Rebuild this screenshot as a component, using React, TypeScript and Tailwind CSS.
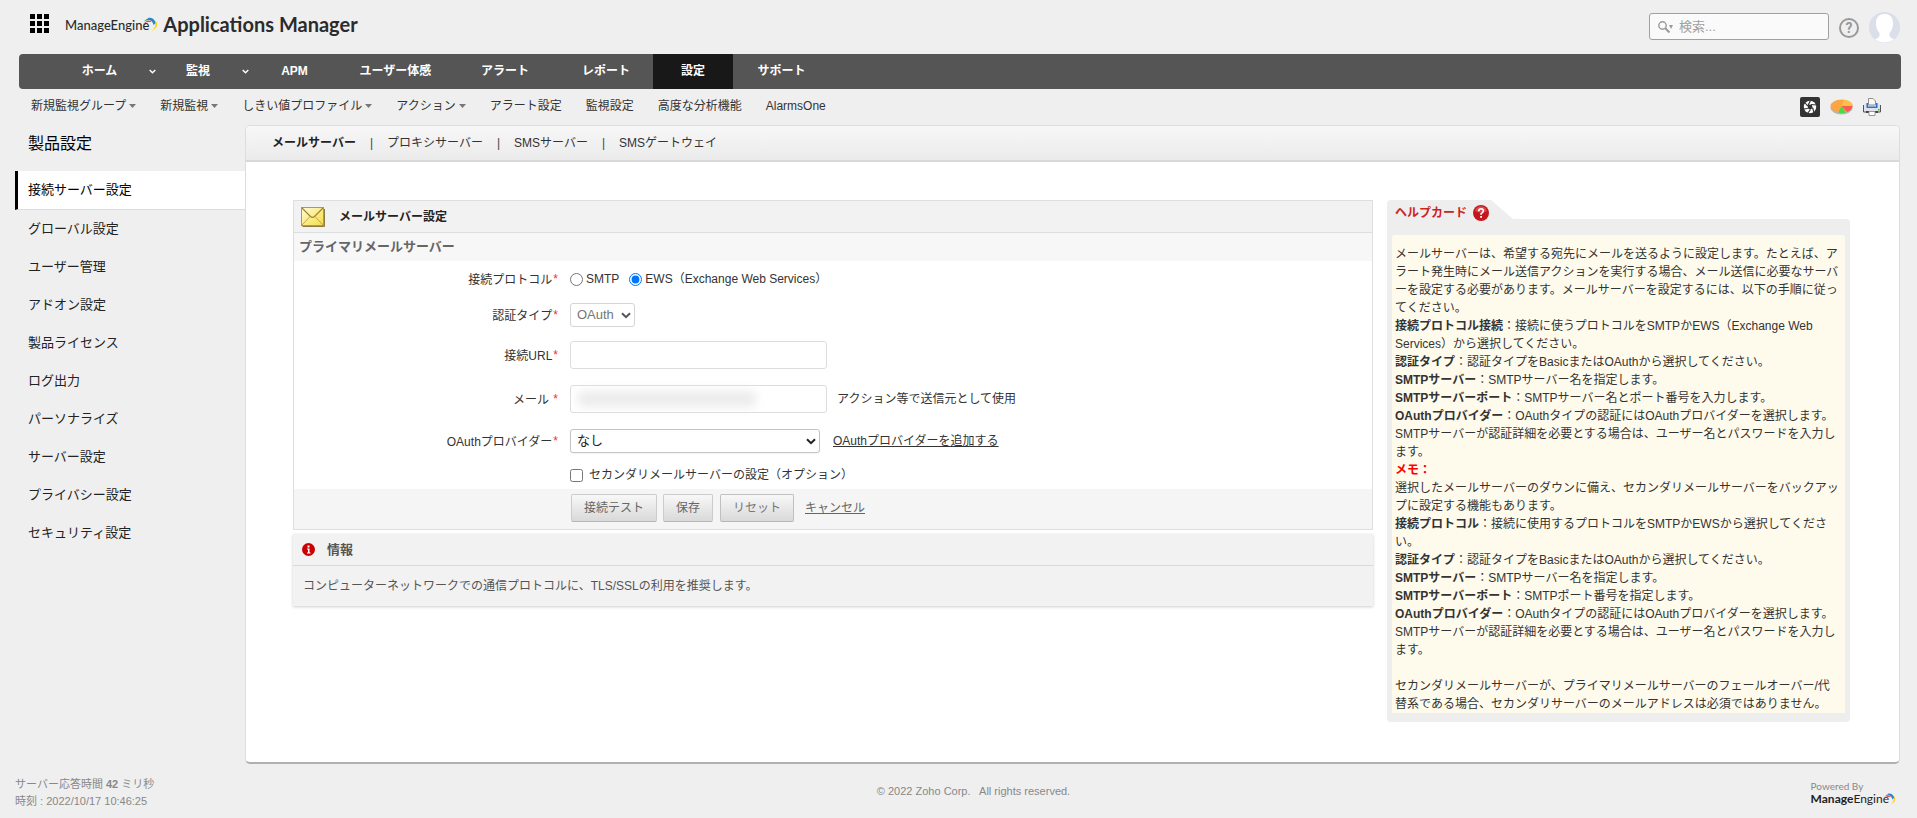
import type { ReactNode } from "react";

const topTabs = [
    { label: "ホーム", width: "w-[95px]", arrow: true },
    { label: "監視", width: "w-[84px]", arrow: true },
    { label: "APM", width: "w-[91px]" },
    { label: "ユーザー体感", width: "w-[111px]" },
    { label: "アラート", width: "w-[108px]" },
    { label: "レポート", width: "w-[94px]" },
    { label: "設定", width: "w-20", active: true },
    { label: "サポート", width: "w-[97px]" }
];

const subLinks = [
    { label: "新規監視グループ", menu: true },
    { label: "新規監視", menu: true },
    { label: "しきい値プロファイル", menu: true },
    { label: "アクション", menu: true },
    { label: "アラート設定" },
    { label: "監視設定" },
    { label: "高度な分析機能" },
    { label: "AlarmsOne" }
];

const sideLinks = [
    "グローバル設定",
    "ユーザー管理",
    "アドオン設定",
    "製品ライセンス",
    "ログ出力",
    "パーソナライズ",
    "サーバー設定",
    "プライバシー設定",
    "セキュリティ設定"
];

const serverTabs = ["メールサーバー", "プロキシサーバー", "SMSサーバー", "SMSゲートウェイ"];

const helpItems = [
    { term: "接続プロトコル接続", text: "接続に使うプロトコルをSMTPかEWS（Exchange Web Services）から選択してください。" },
    { term: "認証タイプ", text: "認証タイプをBasicまたはOAuthから選択してください。" },
    { term: "SMTPサーバー", text: "SMTPサーバー名を指定します。" },
    { term: "SMTPサーバーポート", text: "SMTPサーバー名とポート番号を入力します。" },
    { term: "OAuthプロバイダー", text: "OAuthタイプの認証にはOAuthプロバイダーを選択します。SMTPサーバーが認証詳細を必要とする場合は、ユーザー名とパスワードを入力します。" }
];

const memoItems = [
    { term: "接続プロトコル", text: "接続に使用するプロトコルをSMTPかEWSから選択してください。" },
    { term: "認証タイプ", text: "認証タイプをBasicまたはOAuthから選択してください。" },
    { term: "SMTPサーバー", text: "SMTPサーバー名を指定します。" },
    { term: "SMTPサーバーポート", text: "SMTPポート番号を指定します。" },
    { term: "OAuthプロバイダー", text: "OAuthタイプの認証にはOAuthプロバイダーを選択します。SMTPサーバーが認証詳細を必要とする場合は、ユーザー名とパスワードを入力します。" }
];

function Swoosh({ className }: { className: string }) {
    return (
        <svg viewBox="0 0 15 15" className={className}>
            <path d="M.8 4.600Q3 1.500 6.500 1.300L6 3Q3.500 3 .8 4.600z" fill="#2ba24c" />
            <path d="M.3 7.200Q2.500 3.200 7.500 3.400L8.500 5Q4 4.200.3 7.200z" fill="#e5353c" />
            <path d="M4.500.9Q10.500-.5 13 6L10.500 8Q9.500 3.500 5.500 2.600z" fill="#2a86c8" />
            <path d="M12.500 3.500Q17 9.500 8.800 14.300 13.300 10 12.500 3.500z" fill="#f7d31c" />
        </svg>
    );
}

function Caret() {
    return (
        <svg viewBox="0 0 7 4" className="ml-[3px] h-1 w-[7px]" fill="#777777">
            <path d="M0 0h7L3.500 4z" />
        </svg>
    );
}

function Chevron({ className }: { className: string }) {
    return (
        <svg viewBox="0 0 10 7" className={className} fill="none" stroke="currentColor" strokeWidth="2">
            <path d="M1 1.200 5 5.200 9 1.200" />
        </svg>
    );
}

function Field({ label, id, children, className }: { label?: string; id?: string; children: ReactNode; className: string }) {
    return (
        <div className={`flex items-center ${className}`}>
            <div className="w-[264px] shrink-0 text-right">
                {label && (
                    <label htmlFor={id}>
                        {label}
                        <span className="ml-px align-[1px] text-[#ff2a2a]">*</span>
                    </label>
                )}
            </div>
            <div className="ml-3 flex items-center">{children}</div>
        </div>
    );
}

function HelpList({ items }: { items: { term: string; text: string }[] }) {
    return (
        <>
            {items.map(item => (
                <p key={item.term}>
                    <b>{item.term}</b>：{item.text}
                </p>
            ))}
        </>
    );
}

function Header() {
    return (
        <header className="flex h-[54px] items-start pt-3 pr-[17px] pl-[30px]">
            <button aria-label="メニュー" className="mt-[2px]">
                <svg viewBox="0 0 19 19" className="size-[19px]">
                    {[0, 7, 14].map(y => [0, 7, 14].map(x => <rect key={`${x}-${y}`} x={x} y={y} width="5" height="5" />))}
                </svg>
            </button>
            <a href="#" className="ml-4 flex h-6 items-center font-['Lato',sans-serif] text-[#2b2b2b]">
                <span className="mt-1 text-[13px] font-medium">ManageEngine</span>
                <Swoosh className="-ml-[6px] size-[15px]" />
                <span className="ml-[5px] text-xl font-bold">Applications Manager</span>
            </a>
            <div className="mt-px ml-auto flex h-[27px] w-[180px] items-center rounded-[3px] border border-[#a0a0a0] bg-[#fafafa] pl-2">
                <svg viewBox="0 0 15 12" className="h-3 w-[15px]" fill="none" stroke="#999999">
                    <circle cx="4.500" cy="4.500" r="3.700" strokeWidth="1.400" />
                    <path d="M7.300 7.300 11.500 11.500" strokeWidth="2" />
                    <path d="M11 4h4l-2 4z" fill="#999999" stroke="none" />
                </svg>
                <input aria-label="検索" placeholder="検索..." className="ml-[6px] w-[140px] bg-transparent text-[13px] outline-none placeholder:text-[#a0a0a0]" />
            </div>
            <a href="#" aria-label="ヘルプ" className="mt-[6px] ml-[10px] flex size-5 items-center justify-center rounded-full border-2 border-[#999999] font-['Roboto',sans-serif] text-sm font-bold text-[#999999]">?</a>
            <button aria-label="アカウント" className="ml-[10px]">
                <svg viewBox="0 0 31 31" className="size-[31px]">
                    <circle cx="15.500" cy="15.500" r="15.500" fill="#dbdfea" />
                    <path d="M15.500 2c5 0 8.500 3 8.500 9 0 5-1.500 8-3.500 10v3c1 2 3 2.500 4.500 3.300a15.500 15.500 0 0 1-19 0c1.500-.8 3.500-1.300 4.500-3.300v-3c-2-2-3.500-5-3.500-10 0-6 3.500-9 8.500-9z" fill="#ffffff" />
                </svg>
            </button>
        </header>
    );
}

function ToolIcons() {
    return (
        <div className="ml-auto flex items-center gap-[10px] pr-5">
            <svg viewBox="0 0 20 20" className="size-5">
                <rect width="20" height="20" rx="2" fill="#333333" />
                <circle cx="10" cy="10" r="6.200" fill="#ffffff" />
                <circle cx="10" cy="10" r="2.400" fill="#333333" />
                <g stroke="#333333" strokeWidth="1.200">
                    <path d="M8 8.500 10.500 3.500M11 7.500 16.500 8M12.500 10.500 14 15.500M10.500 12.500 7.500 16.500M7.800 11.500 3.500 12M7.600 9 4.500 5" />
                </g>
            </svg>
            <svg viewBox="0 0 23 16" className="h-4 w-[23px]">
                <ellipse cx="11.500" cy="9" rx="11" ry="6.500" fill="#b5b5b5" />
                <ellipse cx="11.500" cy="7" rx="11" ry="6.500" fill="#fba545" />
                <path d="M11.500 7 14 .700C19 1.300 22.500 3.500 22.500 6.500z" fill="#fbc045" />
                <path d="M11.500 7h11c0 3-2.500 5-5.500 6z" fill="#fa5b56" />
                <path d="M11.500 7 8.500 13.500c3 .8 5 .6 7 0z" fill="#3fe03f" />
            </svg>
            <svg viewBox="0 0 18 18" className="size-[18px]">
                <path d="M.5 7.500 3 5h12l2.500 2.500V14h-17z" fill="#dfe2e8" />
                <path d="M.5 7v7h3M17.500 7v7h-3" stroke="#555555" fill="none" />
                <path d="M5.500 7V.500H10L12.500 3v4z" fill="#f7f7f7" stroke="#8f8f8f" />
                <path d="M3.500 5v5h11V5h-1.500v3.500H5V5z" fill="#2f6fd6" />
                <path d="M3 13h12v2H3z" fill="#444444" />
                <path d="M6 13.500h6v4H6z" fill="#ffffff" stroke="#999999" />
                <path d="M15 11h1.500v1.500H15z" fill="#20c020" />
            </svg>
        </div>
    );
}

function MailForm() {
    return (
        <form className="border border-[#dedede]">
            <div className="flex h-8 items-center border-b border-[#dedede] bg-[#f2f2f2] pl-[7px]">
                <svg viewBox="0 0 24 20" className="h-5 w-6">
                    <defs>
                        <linearGradient id="envelope" x1="0" y1="0" x2="1" y2="1">
                            <stop offset="0" stopColor="#fffce0" />
                            <stop offset="1" stopColor="#f3de3c" />
                        </linearGradient>
                    </defs>
                    <path d="M1.500 19.500h22V2" stroke="#8d7c48" fill="none" />
                    <rect x=".5" y=".5" width="22" height="18" fill="url(#envelope)" stroke="#b89a3c" />
                    <path d="M1 18 9 9.500M22 18 14 9.500" stroke="#c9a445" fill="none" />
                    <path d="M1 1 9.500 9.500q2 1.800 4 0L22 1" stroke="#a9802a" fill="none" strokeWidth="1.200" />
                </svg>
                <h2 className="ml-[14px] font-bold text-[#222222]">メールサーバー設定</h2>
            </div>
            <h3 className="flex h-7 items-center bg-[#f7f7f7] pl-[5px] text-[13px] font-bold text-[#666666]">プライマリメールサーバー</h3>

            <div role="radiogroup" aria-label="接続プロトコル">
                <Field label="接続プロトコル" className="h-9">
                    <input type="radio" id="smtp" name="protocol" className="size-[13px]" />
                    <label htmlFor="smtp" className="ml-[3px]">SMTP</label>
                    <input type="radio" id="ews" name="protocol" defaultChecked className="ml-[10px] size-[13px]" />
                    <label htmlFor="ews" className="ml-[3px]">EWS（Exchange Web Services）</label>
                </Field>
            </div>
            <Field label="認証タイプ" id="auth" className="h-9">
                <div className="relative">
                    <select id="auth" disabled className="h-6 w-[65px] appearance-none rounded-[3px] border border-[#d5d5d5] bg-white pl-[6px] text-[13px] text-[#777777]">
                        <option>OAuth</option>
                    </select>
                    <Chevron className="pointer-events-none absolute top-[9px] right-1 h-[7px] w-[10px] text-[#555555]" />
                </div>
            </Field>
            <Field label="接続URL" id="url" className="h-11">
                <input id="url" className="h-7 w-[257px] rounded-[3px] border border-[#dddddd] bg-white px-2" />
            </Field>
            <Field label="メール " id="mail" className="h-11">
                <div className="relative">
                    <input id="mail" className="h-7 w-[257px] rounded-[3px] border border-[#dddddd] bg-white px-2" />
                    <span className="pointer-events-none absolute top-[6px] left-2 h-4 w-[178px] rounded bg-[#ececec] blur-[5px]" />
                </div>
                <span className="ml-[10px]">アクション等で送信元として使用</span>
            </Field>
            <Field label="OAuthプロバイダー" id="provider" className="h-10">
                <div className="relative">
                    <select id="provider" className="h-6 w-[250px] appearance-none rounded-[3px] border border-[#c4c4c4] bg-white pl-[6px] text-[13px] text-[#222222] shadow-xs">
                        <option>なし</option>
                    </select>
                    <Chevron className="pointer-events-none absolute top-[9px] right-1 h-[7px] w-[10px] text-[#222222]" />
                </div>
                <a href="#" className="ml-[13px] underline">OAuthプロバイダーを追加する</a>
            </Field>
            <Field className="h-7">
                <input type="checkbox" id="secondary" className="size-[13px]" />
                <label htmlFor="secondary" className="ml-[6px]">セカンダリメールサーバーの設定（オプション）</label>
            </Field>

            <div className="flex h-10 items-start bg-[#f5f5f5] pt-[5px] pl-[277px] text-[#666666]">
                <button type="button" className="h-7 w-[86px] rounded-[2px] border border-[#cccccc] border-b-[#b5b5b5] bg-linear-to-b from-[#f8f8f8] to-[#d9d9d9]">接続テスト</button>
                <button type="button" className="ml-[6px] h-7 w-[50px] rounded-[2px] border border-[#cccccc] border-b-[#b5b5b5] bg-linear-to-b from-[#f8f8f8] to-[#d9d9d9]">保存</button>
                <button type="reset" className="ml-[7px] h-7 w-[74px] rounded-[2px] border border-[#c0c0c0] border-b-[#b5b5b5] bg-linear-to-b from-[#f8f8f8] to-[#d9d9d9] text-[#777777]">リセット</button>
                <a href="#" className="ml-[11px] leading-7 underline">キャンセル</a>
            </div>
        </form>
    );
}

function InfoBox() {
    return (
        <section className="mt-1 bg-[#f2f2f2] text-[#555555] shadow-[0_1px_3px_rgba(0,0,0,0.2)]">
            <div className="flex h-8 items-center border-b border-[#dadada] pl-[9px]">
                <svg viewBox="0 0 13 13" className="size-[13px]">
                    <circle cx="6.500" cy="6.500" r="6.500" fill="#cc0000" />
                    <path d="M5 5.500h2.500v4h1v1H5v-1h1v-3H5zM5.500 2.500h2v2h-2z" fill="#ffffff" />
                </svg>
                <h2 className="ml-3 text-[13px] font-bold">情報</h2>
            </div>
            <p className="flex h-10 items-center pl-[10px]">コンピューターネットワークでの通信プロトコルに、TLS/SSLの利用を推奨します。</p>
        </section>
    );
}

function HelpCard() {
    return (
        <aside className="w-[463px] shrink-0">
            <div className="flex h-[19px]">
                <div className="w-[104px] rounded-tl-[4px] bg-[#eeeeee] pt-1 pl-2 text-[#cc2222]">
                    <h2 className="flex h-[18px] items-center whitespace-nowrap font-bold">
                        ヘルプカード
                        <svg viewBox="0 0 16 16" className="ml-[6px] size-4 shrink-0">
                            <circle cx="8" cy="8" r="8" fill="#c4161c" />
                            <path d="M2 6a6.200 6.200 0 0 1 12 0q-6 3-12 0z" fill="#d9484c" />
                            <path d="M5.700 6.200Q5.800 3.800 8.100 3.800t2.200 2.200Q10.300 7.300 8.100 8.600V9.800" stroke="#ffffff" strokeWidth="1.600" fill="none" />
                            <rect x="7.200" y="11" width="1.800" height="1.800" fill="#ffffff" />
                        </svg>
                    </h2>
                </div>
                <svg viewBox="0 0 22 19" className="h-[19px] w-[22px]" fill="#eeeeee">
                    <path d="M0 0 22 19H0z" />
                </svg>
            </div>
            <div className="rounded-b-[4px] rounded-tr-[4px] bg-[#eeeeee] px-[5px] pt-4 pb-[9px]">
                <div className="rounded-t-[3px] bg-[#fffbec] pt-[10px] pr-1 pl-[3px] leading-[18px] text-[#333333] [line-break:loose]">
                    <p>メールサーバーは、希望する宛先にメールを送るように設定します。たとえば、アラート発生時にメール送信アクションを実行する場合、メール送信に必要なサーバーを設定する必要があります。メールサーバーを設定するには、以下の手順に従ってください。</p>
                    <HelpList items={helpItems} />
                    <p className="font-bold text-[#ff0000]">メモ：</p>
                    <p>選択したメールサーバーのダウンに備え、セカンダリメールサーバーをバックアップに設定する機能もあります。</p>
                    <HelpList items={memoItems} />
                    <p className="mt-[18px]">セカンダリメールサーバーが、プライマリメールサーバーのフェールオーバー/代替系である場合、セカンダリサーバーのメールアドレスは必須ではありません。</p>
                </div>
            </div>
        </aside>
    );
}

export default function App() {
    return (
        <div lang="ja" className="min-h-screen bg-[#efefef] font-['Liberation_Sans','Noto_Sans_CJK_JP',sans-serif] text-xs text-[#333333]">
            <Header />

            <nav className="mr-4 ml-[19px] flex h-[35px] rounded-[4px] bg-[#555555] pl-[33px]">
                {topTabs.map(tab => (
                    <div key={tab.label} className={`flex items-center ${tab.active ? "bg-[#181818]" : ""}`}>
                        <a href="#" className={`pb-px text-center font-bold text-white ${tab.width}`}>{tab.label}</a>
                        {tab.arrow && <Chevron className="ml-[2px] h-[5px] w-[7px] text-white" />}
                    </div>
                ))}
            </nav>

            <div className="mr-4 ml-[19px] flex h-9 items-center pl-3">
                <div className="flex gap-6 pb-[2px]">
                    {subLinks.map(link => (
                        <a key={link.label} href="#" className="flex items-center">
                            {link.label}
                            {link.menu && <Caret />}
                        </a>
                    ))}
                </div>
                <ToolIcons />
            </div>

            <div className="flex">
                <aside className="w-[245px] shrink-0 pl-[15px] text-[13px] text-[#222222]">
                    <h1 className="flex h-[46px] items-center pb-2 pl-[13px] text-base text-black">製品設定</h1>
                    <a href="#" className="flex h-[39px] items-center border-b border-l-3 border-b-[#dddddd] border-l-black bg-white pl-[10px] text-black">接続サーバー設定</a>
                    {sideLinks.map(link => (
                        <a key={link} href="#" className="flex h-[38px] items-center pb-px pl-[13px]">{link}</a>
                    ))}
                </aside>

                <main className="mr-[17px] min-h-[639px] flex-1 overflow-hidden rounded-[5px] border border-[#dddddd] border-b-2 border-b-[#b0b0b0] bg-white">
                    <nav className="flex h-9 items-center border-b-2 border-[#d8d8d8] bg-linear-to-b from-[#f7f7f7] to-[#ebebeb] pl-[26px]">
                        {serverTabs.map((tab, i) => (
                            <span key={tab} className="flex items-center">
                                {i > 0 && <span className="mx-[14px] text-[#444444]">|</span>}
                                <a href="#" className={i === 0 ? "font-bold text-[#222222]" : ""}>{tab}</a>
                            </span>
                        ))}
                    </nav>
                    <div className="flex items-start pt-[38px] pr-[49px] pl-[47px]">
                        <div className="min-w-0 flex-1">
                            <MailForm />
                            <InfoBox />
                        </div>
                        <div className="ml-[14px]">
                            <HelpCard />
                        </div>
                    </div>
                </main>
            </div>

            <footer className="flex items-start justify-between px-[15px] pt-3 text-[11px] leading-[17px] text-[#888888]">
                <div className="flex-1">
                    <p>サーバー応答時間 <b>42</b> ミリ秒</p>
                    <p>時刻 : 2022/10/17 10:46:25</p>
                </div>
                <p className="mt-[7px] ml-9">© 2022 Zoho Corp. &nbsp; All rights reserved.</p>
                <div className="flex flex-1 justify-end pr-[6px]">
                    <a href="#" className="mt-[5px] font-['Lato',sans-serif] leading-3">
                        <span className="block text-[10px] leading-[10px]">Powered By</span>
                        <span className="flex items-center text-xs text-[#222222]">
                            <span><b>Manage</b>Engine</span>
                            <Swoosh className="-ml-[5px] size-3" />
                        </span>
                    </a>
                </div>
            </footer>
        </div>
    );
}
